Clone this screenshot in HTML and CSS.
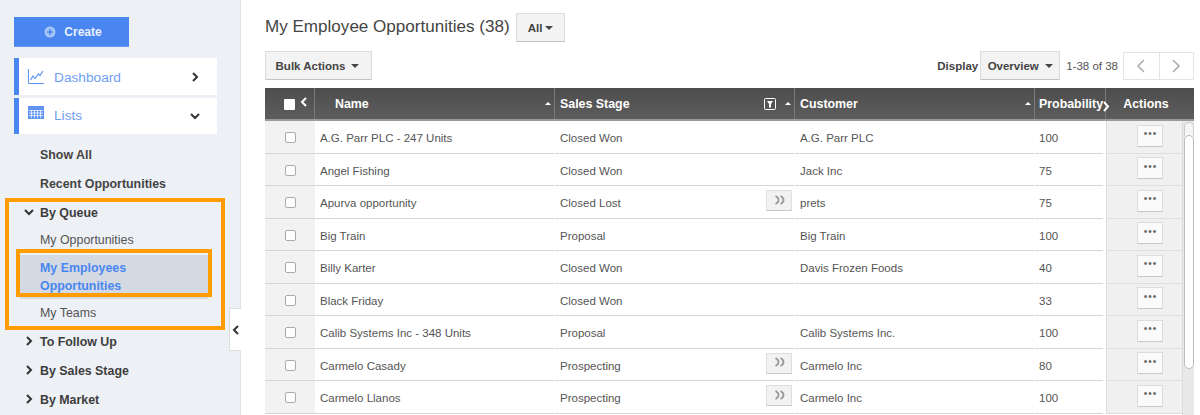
FILE: index.html
```html
<!DOCTYPE html>
<html lang="en">
<head>
<meta charset="utf-8">
<title>My Employee Opportunities</title>
<link rel="stylesheet" href="styles.css">
</head>
<body>
<div class="app">
  <aside class="sidebar">
    <button class="create"><svg class="plus" width="12" height="12" viewBox="0 0 12 12"><circle cx="6" cy="6" r="5.5" fill="#a9c6f8"/><path d="M6 3v6M3 6h6" stroke="#4a86f0" stroke-width="1.6"/></svg>Create</button>
    <div class="card card-dash">
      <svg class="card-icon" width="16" height="15" viewBox="0 0 16 15"><path d="M.5 0v14.5H16" fill="none" stroke="#5f94f3"/><path d="M2.500 11 5 7l2 2.500L10.500 5l1.500 1.500L15 2" fill="none" stroke="#5f94f3" stroke-width="1.200"/></svg>
      <span class="card-label">Dashboard</span>
      <svg class="chev" width="10" height="10" viewBox="0 0 10 10"><path d="M3 1l4 4-4 4" fill="none" stroke="#333" stroke-width="2"/></svg>
    </div>
    <div class="card card-lists">
      <svg class="card-icon icon-up" width="16" height="13" viewBox="0 0 16 13"><rect width="16" height="13" fill="#5f94f3"/><path d="M1 4.500h14M1 7h14M1 9.500h14M3.500 4v8M6.500 4v8M9.500 4v8M12.500 4v8" stroke="#fff" stroke-width=".7"/></svg>
      <span class="card-label">Lists</span>
      <svg class="chev" width="10" height="10" viewBox="0 0 10 10"><path d="M1 3l4 4 4-4" fill="none" stroke="#333" stroke-width="2"/></svg>
    </div>
    <nav class="nav">
      <a class="nav-top">Show All</a>
      <a class="nav-top">Recent Opportunities</a>
      <a class="nav-top nav-group"><svg class="gchev" width="10" height="10" viewBox="0 0 10 10"><path d="M1 3l4 4 4-4" fill="none" stroke="#333" stroke-width="2"/></svg>By Queue</a>
      <a class="nav-sub nav-first">My Opportunities</a>
      <a class="nav-sub nav-active">My Employees Opportunities</a>
      <a class="nav-sub nav-teams">My Teams</a>
      <a class="nav-top nav-group"><svg class="gchev" width="10" height="10" viewBox="0 0 10 10"><path d="M3 1l4 4-4 4" fill="none" stroke="#333" stroke-width="2"/></svg>To Follow Up</a>
      <a class="nav-top nav-group"><svg class="gchev" width="10" height="10" viewBox="0 0 10 10"><path d="M3 1l4 4-4 4" fill="none" stroke="#333" stroke-width="2"/></svg>By Sales Stage</a>
      <a class="nav-top nav-group"><svg class="gchev" width="10" height="10" viewBox="0 0 10 10"><path d="M3 1l4 4-4 4" fill="none" stroke="#333" stroke-width="2"/></svg>By Market</a>
    </nav>
    <div class="mark mark-outer"></div>
    <div class="mark mark-inner"></div>
    <div class="collapse"><svg width="8" height="10" viewBox="0 0 8 10"><path d="M6 1 2 5l4 4" fill="none" stroke="#333" stroke-width="2"/></svg></div>
  </aside>
  <main class="main">
    <div class="title-row">
      <h1 class="title">My Employee Opportunities (38)</h1>
      <button class="btn btn-all">All<i class="caret"></i></button>
    </div>
    <div class="tools">
      <button class="btn btn-bulk">Bulk Actions<i class="caret caret-wide"></i></button>
      <div class="tools-right">
        <span class="display">Display</span>
        <button class="btn btn-view">Overview<i class="caret caret-wide"></i></button>
        <span class="count">1-38 of 38</span>
        <div class="pager">
          <span class="page"><svg width="10" height="14" viewBox="0 0 10 14"><path d="M8 1 2 7l6 6" fill="none" stroke="#aaa" stroke-width="1.500"/></svg></span>
          <span class="page"><svg width="10" height="14" viewBox="0 0 10 14"><path d="M2 1l6 6-6 6" fill="none" stroke="#aaa" stroke-width="1.500"/></svg></span>
        </div>
      </div>
    </div>
    <div class="table">
      <div class="thead">
        <div class="th th-check"><span class="hbox"></span><svg class="hchev" width="8" height="11" viewBox="0 0 8 11"><path d="M6 1 2 5l4 4" fill="none" stroke="#fff" stroke-width="2"/></svg></div>
        <div class="th th-name">Name<i class="sort"></i></div>
        <div class="th th-stage">Sales Stage<svg class="filter" width="12" height="12" viewBox="0 0 12 12"><rect x=".5" y=".5" width="11" height="11" rx="1" fill="none" stroke="#fff"/><path d="M3 3h6L7 6v3.500H5V6z" fill="#fff"/></svg><i class="sort sort-near"></i></div>
        <div class="th th-cust">Customer<i class="sort"></i></div>
        <div class="th th-prob">Probability<svg class="pchev" width="8" height="11" viewBox="0 0 8 11"><path d="M2 1l4 4.500L2 10" fill="none" stroke="#fff" stroke-width="2"/></svg></div>
        <div class="th th-act">Actions</div>
      </div>
      <div class="tbody">
        <div class="rows">
          <div class="row"><div class="c c-check"><span class="box"></span></div><div class="c c-name">A.G. Parr PLC - 247 Units</div><div class="c c-stage">Closed Won</div><div class="c c-cust">A.G. Parr PLC</div><div class="c c-prob">100</div><div class="c c-act"><span class="more">•••</span></div></div>
          <div class="row"><div class="c c-check"><span class="box"></span></div><div class="c c-name">Angel Fishing</div><div class="c c-stage">Closed Won</div><div class="c c-cust">Jack Inc</div><div class="c c-prob">75</div><div class="c c-act"><span class="more">•••</span></div></div>
          <div class="row"><div class="c c-check"><span class="box"></span></div><div class="c c-name">Apurva opportunity</div><div class="c c-stage">Closed Lost<span class="expand"><svg width="12" height="10" viewBox="0 0 12 10"><path d="M1.500 1c2 1 3 2.500 3 4s-1 3-3 4M6.500 1c2 1 3 2.500 3 4s-1 3-3 4" fill="none" stroke="#999" stroke-width="1.800"/></svg></span></div><div class="c c-cust">prets</div><div class="c c-prob">75</div><div class="c c-act"><span class="more">•••</span></div></div>
          <div class="row"><div class="c c-check"><span class="box"></span></div><div class="c c-name">Big Train</div><div class="c c-stage">Proposal</div><div class="c c-cust">Big Train</div><div class="c c-prob">100</div><div class="c c-act"><span class="more">•••</span></div></div>
          <div class="row"><div class="c c-check"><span class="box"></span></div><div class="c c-name">Billy Karter</div><div class="c c-stage">Closed Won</div><div class="c c-cust">Davis Frozen Foods</div><div class="c c-prob">40</div><div class="c c-act"><span class="more">•••</span></div></div>
          <div class="row"><div class="c c-check"><span class="box"></span></div><div class="c c-name">Black Friday</div><div class="c c-stage">Closed Won</div><div class="c c-cust"></div><div class="c c-prob">33</div><div class="c c-act"><span class="more">•••</span></div></div>
          <div class="row"><div class="c c-check"><span class="box"></span></div><div class="c c-name">Calib Systems Inc - 348 Units</div><div class="c c-stage">Proposal</div><div class="c c-cust">Calib Systems Inc.</div><div class="c c-prob">100</div><div class="c c-act"><span class="more">•••</span></div></div>
          <div class="row"><div class="c c-check"><span class="box"></span></div><div class="c c-name">Carmelo Casady</div><div class="c c-stage">Prospecting<span class="expand"><svg width="12" height="10" viewBox="0 0 12 10"><path d="M1.500 1c2 1 3 2.500 3 4s-1 3-3 4M6.500 1c2 1 3 2.500 3 4s-1 3-3 4" fill="none" stroke="#999" stroke-width="1.800"/></svg></span></div><div class="c c-cust">Carmelo Inc</div><div class="c c-prob">80</div><div class="c c-act"><span class="more">•••</span></div></div>
          <div class="row"><div class="c c-check"><span class="box"></span></div><div class="c c-name">Carmelo Llanos</div><div class="c c-stage">Prospecting<span class="expand"><svg width="12" height="10" viewBox="0 0 12 10"><path d="M1.500 1c2 1 3 2.500 3 4s-1 3-3 4M6.500 1c2 1 3 2.500 3 4s-1 3-3 4" fill="none" stroke="#999" stroke-width="1.800"/></svg></span></div><div class="c c-cust">Carmelo Inc</div><div class="c c-prob">100</div><div class="c c-act"><span class="more">•••</span></div></div>
        </div>
        <div class="scrollbar"><span class="cap"></span><span class="thumb"></span></div>
      </div>
    </div>
  </main>
</div>
</body>
</html>
```
FILE: styles.css
```css
* { box-sizing: border-box; }
html, body { margin: 0; height: 415px; overflow: hidden; }
body { font-family: "Liberation Sans", Arial, sans-serif; color: #444; background: #fff; }
.app { display: flex; height: 415px; }

.sidebar { position: relative; width: 241px; flex: none; height: 415px; background: #edf0f5; border-right: 1px solid #dfe2e7; padding: 17px 0 0 14px; }
.create { display: flex; align-items: center; justify-content: center; gap: 8px; width: 115px; height: 30px; padding: 0 0 0 6px; border: 0; border-bottom: 1px solid #6b9cf2; background: #4a86f0; color: #e9f0fe; font: bold 12px "Liberation Sans", sans-serif; }
.plus { margin-left: -3px; }
.card { display: flex; align-items: center; width: 203px; background: #fff; border-left: 5px solid #4a86f0; padding-left: 9px; }
.card-dash { height: 37px; margin-top: 11px; }
.card-lists { height: 36px; margin-top: 3px; }
.card-icon { flex: none; }
.icon-up { margin-top: -8px; }
.card-label { margin-left: 10px; font-size: 13.7px; color: #6f9ef5; flex: 1; }
.card-dash .card-label { margin-top: 1px; }
.card-lists .card-label { margin-top: -1px; }
.chev { margin-right: 17px; }

.nav { display: flex; flex-direction: column; padding-top: 6px; margin-left: -14px; width: 216px; }
.nav a { display: block; padding-left: 40px; font-size: 12.4px; line-height: 18px; }
.nav-top { position: relative; font-weight: bold; color: #444; padding-top: 5.5px; padding-bottom: 5.5px; }
.nav-group { color: #3d3d3d; }
.nav-sub { color: #555; padding-top: 4.500px; padding-bottom: 4.500px; }
.nav .nav-first { padding-top: 3.500px; padding-bottom: 6.500px; }
.nav .nav-active { margin: 0 8px 0 20px; padding: 4px 20px 4px 20px; background: #d3dae3; color: #4a86f0; font-weight: bold; }
.nav .nav-teams { padding-bottom: 5.500px; }
.gchev { position: absolute; left: 24px; top: 9px; }

.mark { position: absolute; border: 4px solid #ff9c00; pointer-events: none; }
.mark-outer { left: 5px; top: 198px; width: 220px; height: 132px; }
.mark-inner { left: 16px; top: 249px; width: 196px; height: 48px; }
.collapse { position: absolute; left: 229px; top: 308px; width: 12px; height: 43px; background: #fff; border: 1px solid #ddd; border-right: 0; display: flex; align-items: center; justify-content: center; }

.main { flex: 1; min-width: 0; padding: 13px 6px 0 24px; }
.title-row { display: flex; align-items: center; height: 29px; }
.title { margin: -2px 0 0; font-size: 17.07px; font-weight: normal; color: #444; line-height: 28px; }
.btn { border: 1px solid #dcdcdc; border-bottom-color: #c4c4c4; background: #f3f3f3; color: #444; font: bold 11.5px "Liberation Sans", sans-serif; padding: 0; display: inline-flex; align-items: center; justify-content: center; }
.btn-all { width: 49px; height: 29px; margin-left: 6px; }
.caret { display: inline-block; width: 0; height: 0; margin-left: 2px; border: 4px solid transparent; border-top-color: #444; border-bottom: 0; }
.caret-wide { margin-left: 6px; }
.tools { display: flex; align-items: center; justify-content: space-between; margin-top: 9px; height: 29px; }
.btn-bulk { width: 107px; height: 29px; padding-right: 2px; }
.tools-right { display: flex; align-items: center; }
.display { font-size: 11.5px; font-weight: bold; color: #444; margin-right: 2px; }
.btn-view { width: 80px; height: 29px; }
.count { font-size: 11.5px; color: #555; margin-left: 6px; }
.pager { display: flex; margin-left: 5px; border: 1px solid #e4e4e4; height: 28px; }
.page { width: 34.5px; display: flex; align-items: center; justify-content: center; }
.page + .page { border-left: 1px solid #e4e4e4; }

.table { margin-top: 8px; width: 929px; }
.thead { display: grid; grid-template-columns: 50px 240px 240px 240px 71px 88px; height: 33px; background: linear-gradient(#4d4d4d, #5d5d5d); border-bottom: 2px solid #9a9a9a; }
.th { position: relative; display: flex; align-items: center; color: #fff; font-size: 12.4px; font-weight: bold; border-right: 1px solid #7a7a7a; padding-left: 5px; }
.th-check { padding-left: 19px; }
.th-name { padding-left: 20px; }
.th-act { justify-content: center; padding: 0 8px 0 0; border-right: 0; }
.th-prob { padding-left: 4px; white-space: nowrap; }
.hbox { width: 11px; height: 11px; background: #fff; border-radius: 1px; margin-top: 1px; }
.hchev { margin-left: 5px; margin-top: -3px; }
.pchev { position: absolute; right: -5px; top: 13px; }
.sort { position: absolute; right: 3px; top: 14px; border: 3px solid transparent; border-bottom: 3px solid #fff; border-top: 0; }
.filter { position: absolute; right: 18px; top: 10px; }
.tbody { display: flex; height: 295px; overflow: hidden; }
.rows { width: 917px; flex: none; }
.row { display: grid; grid-template-columns: 50px 240px 240px 240px 71px 76px; height: 32.5px; }
.c { display: flex; align-items: center; font-size: 11.5px; color: #555; padding: 3px 0 0 5px; border-bottom: 1px solid #d5d5d5; position: relative; margin-right: 1px; }
.c-check { justify-content: center; padding: 2px 0 0; background: #f2f2f2; margin-right: 0; }
.c-prob { padding-left: 4px; margin-right: 3px; }
.c-act { justify-content: center; padding: 0 0 2px 11px; background: #f0f0f0; border-left: 1px solid #dcdcdc; border-bottom-color: #dedede; margin-right: 0; }
.box { width: 11px; height: 11px; background: #fff; border: 1px solid #aaa; border-radius: 2px; }
.more { display: flex; align-items: center; justify-content: center; width: 26px; height: 22px; padding-bottom: 3px; background: #fafafa; border: 1px solid #dcdcdc; border-bottom-color: #c8c8c8; color: #666; font-size: 10px; line-height: 10px; letter-spacing: 1px; text-indent: 1px; }
.expand { position: absolute; right: 2px; top: 4px; width: 26px; height: 21px; background: #f2f2f2; border: 1px solid #dedede; border-bottom-color: #c8c8c8; display: flex; align-items: center; justify-content: center; padding: 0 0 2px 2px; }
.scrollbar { position: relative; width: 12px; flex: none; background: #e8e8e8; border-left: 1px solid #ddd; }
.cap { position: absolute; left: 1px; top: 1px; width: 10px; height: 14px; background: #f6f6f6; border: 1px solid #ccc; border-bottom: 0; border-radius: 5px 5px 0 0; }
.thumb { position: absolute; left: 1px; top: 14px; width: 10px; height: 234px; background: #fff; border: 1px solid #bbb; border-radius: 5px; }
```
